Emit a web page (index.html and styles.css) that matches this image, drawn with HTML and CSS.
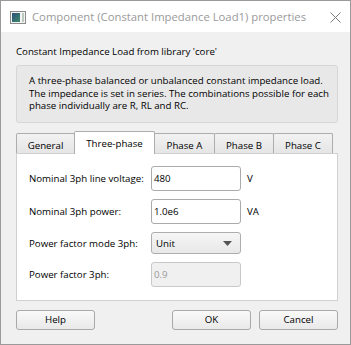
FILE: index.html
```html
<!DOCTYPE html>
<html>
<head>
<meta charset="utf-8">
<link rel="stylesheet" href="styles.css">
</head>
<body>
<div class="window">
  <div class="titlebar">
    <svg class="app-icon" width="16" height="13" viewBox="0 0 16 13">
      <defs>
        <linearGradient id="g" x1="0" y1="0" x2="1" y2="1">
          <stop offset="0" stop-color="#2d4f7a"/>
          <stop offset="1" stop-color="#3e8a6a"/>
        </linearGradient>
      </defs>
      <rect x="0.5" y="0.5" width="15" height="12" fill="#f4f4f4" stroke="#8a8a8a"/>
      <rect x="2" y="2" width="8" height="9" fill="url(#g)"/>
      <rect x="12" y="2" width="2" height="9" fill="#b9c9c0"/>
    </svg>
    <span class="title">Component (Constant Impedance Load1) properties</span>
    <svg class="close" width="11" height="11" viewBox="0 0 11 11">
      <path d="M0.5 0.5 L10.5 10.5 M10.5 0.5 L0.5 10.5" stroke="#7a7a7a" stroke-width="1" fill="none"/>
    </svg>
  </div>
  <div class="content">
    <div class="libline">Constant Impedance Load from library 'core'</div>
    <div class="desc">A three-phase balanced or unbalanced constant impedance load.<br>The impedance is set in series. The combinations possible for each<br>phase individually are R, RL and RC.</div>
    <div class="tabs">
      <div class="tab t-general">General</div>
      <div class="tab t-three active">Three-phase</div>
      <div class="tab t-a">Phase A</div>
      <div class="tab t-b">Phase B</div>
      <div class="tab t-c">Phase C</div>
    </div>
    <div class="panel">
      <div class="row">
        <div class="label">Nominal 3ph line voltage:</div>
        <div class="input">480</div>
        <div class="unit">V</div>
      </div>
      <div class="row">
        <div class="label">Nominal 3ph power:</div>
        <div class="input">1.0e6</div>
        <div class="unit">VA</div>
      </div>
      <div class="row">
        <div class="label">Power factor mode 3ph:</div>
        <div class="combo"><span>Unit</span><svg class="arrow" width="9" height="5" viewBox="0 0 9 5"><path d="M0 0 H9 L4.5 5 Z" fill="#555"/></svg></div>
      </div>
      <div class="row">
        <div class="label">Power factor 3ph:</div>
        <div class="input disabled">0.9</div>
      </div>
    </div>
    <div class="buttons">
      <div class="btn">Help</div>
      <div class="spacer"></div>
      <div class="btn">OK</div>
      <div class="btn">Cancel</div>
    </div>
  </div>
</div>
</body>
</html>
```

FILE: styles.css
```css
html, body {
  margin: 0;
  padding: 0;
  background: #f0f0f0;
}
body {
  font-family: "Open Sans", "Noto Sans", sans-serif;
  font-size: 9.7px;
  color: #000;
}
.window {
  box-sizing: border-box;
  width: 351px;
  height: 345px;
  border: 1px solid #9a9a9a;
  background: #f0f0f0;
  display: flex;
  flex-direction: column;
}
.titlebar {
  height: 31px;
  background: #fff;
  display: flex;
  align-items: center;
  padding-left: 9px;
  padding-right: 9px;
}
.app-icon {
  flex: none;
  margin-top: 1px;
}
.title {
  margin-left: 6px;
  font-size: 11.3px;
  color: #9a9a9a;
  flex: 1;
  white-space: nowrap;
}
.close {
  flex: none;
  margin-top: 1px;
}
.content {
  flex: 1;
  padding: 13px 12px 0 15px;
  display: flex;
  flex-direction: column;
}
.libline {
  line-height: 14px;
  height: 14px;
}
.desc {
  margin-top: 6px;
  border: 1px solid #d6d6d6;
  border-radius: 3px;
  background: #e8e8e8;
  padding: 9px 4px 7px 12px;
  line-height: 12.7px;
  height: 40px;
  white-space: nowrap;
}
.tabs {
  margin-top: 8px;
  display: flex;
  align-items: flex-end;
  height: 22px;
  position: relative;
  z-index: 1;
}
.tab {
  box-sizing: border-box;
  height: 20px;
  border: 1px solid #adadad;
  border-bottom: none;
  background: linear-gradient(#f2f2f2, #e5e5e5);
  margin-left: -1px;
  text-align: center;
  padding-top: 2px;
  line-height: 19px;
  border-radius: 2px 2px 0 0;
}
.t-general { width: 59px; margin-left: 0; }
.t-three { width: 81px; }
.t-a { width: 61px; }
.t-b { width: 60px; }
.t-c { width: 60px; }
.tab.active {
  height: 23px;
  margin-bottom: -1px;
  background: #fff;
  padding-top: 2px;
  line-height: 20px;
  position: relative;
  z-index: 2;
}
.panel {
  box-sizing: border-box;
  height: 148px;
  border: 1px solid #d0d0d0;
  background: #fff;
  padding: 12px 12px 0 12px;
  display: flex;
  flex-direction: column;
  gap: 8px;
}
.row {
  display: flex;
  align-items: center;
}
.label {
  width: 122px;
  flex: none;
}
.input {
  box-sizing: border-box;
  width: 90px;
  height: 25px;
  border: 1px solid #ababab;
  border-radius: 3px;
  background: #fff;
  padding-left: 2px;
  line-height: 23px;
}
.input.disabled {
  background: #f0f0f0;
  border-color: #c9c9c9;
  color: #9a9a9a;
}
.unit {
  margin-left: 6px;
}
.combo {
  box-sizing: border-box;
  width: 90px;
  height: 22px;
  border: 1px solid #adadad;
  border-radius: 3px;
  background: linear-gradient(#f6f6f6, #e8e8e8);
  padding-left: 4px;
  padding-right: 8px;
  display: flex;
  align-items: center;
  justify-content: space-between;
}
.arrow {
  margin-top: 1px;
}
.buttons {
  margin-top: 9px;
  display: flex;
  gap: 8px;
}
.spacer {
  flex: 1;
}
.btn {
  box-sizing: border-box;
  width: 79px;
  height: 20px;
  border: 1px solid #a9a9a9;
  border-radius: 3px;
  background: linear-gradient(#f9f9f9, #e9e9e9);
  text-align: center;
  line-height: 18px;
}
```
